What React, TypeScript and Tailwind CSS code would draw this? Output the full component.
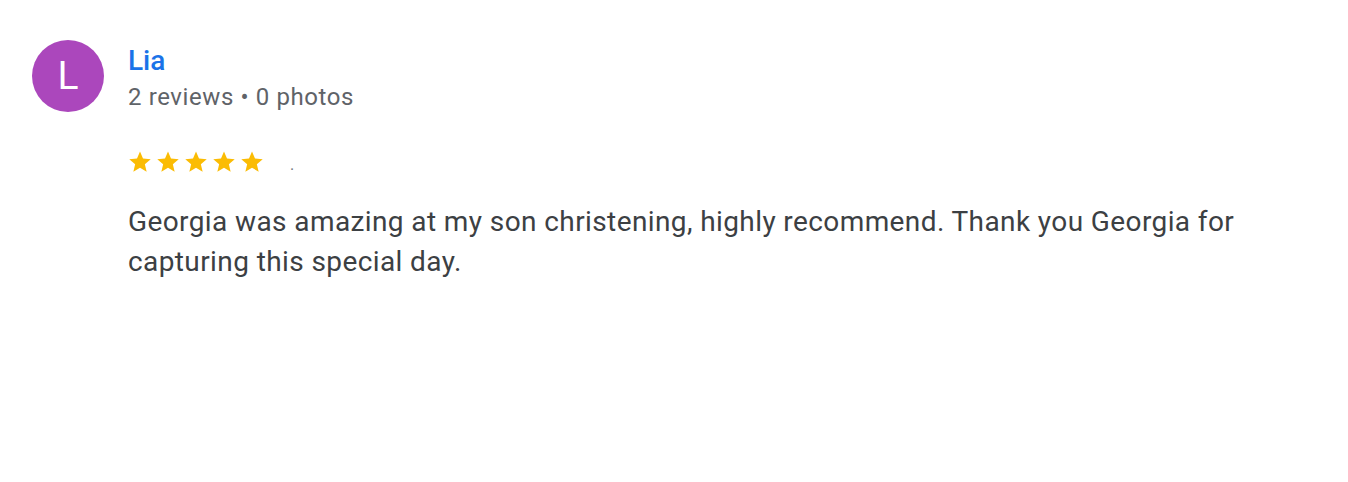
import React from "react";

const Star = () => (
  <svg width="24" height="24" viewBox="0 0 24 24" className="block">
    <path
      fill="#fbbc04"
      d="M12 1.5l3 7.1 7.7.6-5.85 5 1.8 7.5L12 17.7l-6.65 4 1.8-7.5-5.85-5 7.7-.6z"
    />
  </svg>
);

export default function App() {
  return (
    <div
      className="w-[1348px] h-[482px] bg-white flex items-start pl-[32px] pr-[32px] pt-[40px]"
      style={{ fontFamily: "Roboto, 'Noto Sans', sans-serif" }}
    >
      <div className="w-[72px] h-[72px] shrink-0 rounded-full bg-[#ab47bc] flex items-center justify-center text-white text-[39px] font-normal leading-none">
        L
      </div>
      <div className="ml-[24px] mt-[3px] flex flex-col">
        <div className="text-[28px] leading-[36px] font-medium text-[#1a73e8]">Lia</div>
        <div className="mt-[2px] text-[24px] leading-[32px] tracking-[0.6px] text-[#5f6368]">
          2 reviews • 0 photos
        </div>
        <div className="mt-[37px] flex items-center h-[24px]">
          <div className="flex gap-[4px]">
            <Star />
            <Star />
            <Star />
            <Star />
            <Star />
          </div>
          <span className="ml-[26px] mt-[6px] text-[16px] text-[#70757a]">.</span>
        </div>
        <div className="mt-[28px] text-[28px] leading-[40px] tracking-[0.4px] text-[#3c4043]">
          Georgia was amazing at my son christening, highly recommend. Thank you Georgia for capturing this special day.
        </div>
      </div>
    </div>
  );
}
